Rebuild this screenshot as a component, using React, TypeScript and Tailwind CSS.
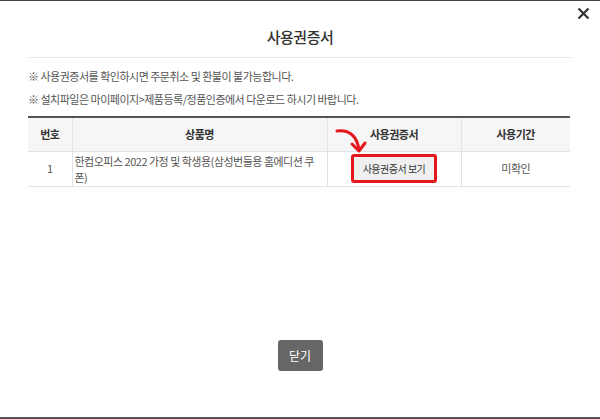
import React from "react";

const font = { fontFamily: '"Noto Sans CJK KR", "Noto Sans", sans-serif' };

function CurvedArrow() {
  return (
    <svg
      className="pointer-events-none absolute left-0 top-0"
      width="44"
      height="38"
      viewBox="0 0 44 38"
      fill="none"
      stroke="#e5161c"
      strokeWidth="3"
      strokeLinecap="round"
      strokeLinejoin="round"
    >
      <path d="M9 13 Q28 11 31 32" />
      <path d="M24 26 L31 33 L37 25" />
    </svg>
  );
}

export default function App() {
  return (
    <div
      className="relative flex h-[419px] w-[600px] flex-col border-t border-b-2 border-t-[#444] border-b-[#555] bg-white text-[#444]"
      style={font}
    >
      <button className="absolute right-[10px] top-[6px] text-[#333]" aria-label="닫기">
        <svg width="13" height="13" viewBox="0 0 13 13" stroke="currentColor" strokeWidth="2.2">
          <path d="M1.5 1.5 L11.5 11.5 M11.5 1.5 L1.5 11.5" />
        </svg>
      </button>

      <div className="mx-[28px] flex flex-col">
        <h1 className="mt-[25px] text-center text-[15px] font-medium leading-[22px] tracking-[-0.5px] text-[#333]">
          사용권증서
        </h1>
        <div className="mt-[9px] h-px bg-[#e6e6e6]" />

        <div className="mt-[10px] flex flex-col gap-[7px] text-[11px] leading-[16px] tracking-[-0.5px] text-[#555]">
          <p>※ 사용권증서를 확인하시면 주문취소 및 환불이 불가능합니다.</p>
          <p>※ 설치파일은 마이페이지&gt;제품등록/정품인증에서 다운로드 하시기 바랍니다.</p>
        </div>

        <table className="mt-[9px] w-[542px] table-fixed border-collapse border-t-2 border-t-[#555] text-[11px] tracking-[-0.5px]">
          <colgroup>
            <col className="w-[44px]" />
            <col className="w-[255px]" />
            <col className="w-[134px]" />
            <col className="w-[109px]" />
          </colgroup>
          <thead>
            <tr className="h-[34px] bg-[#f6f6f6] text-[#333]">
              <th className="border-b border-r border-[#e3e3e3] font-semibold">번호</th>
              <th className="border-b border-r border-[#e3e3e3] font-semibold">상품명</th>
              <th className="relative border-b border-r border-[#e3e3e3] font-semibold">
                <CurvedArrow />
                사용권증서
              </th>
              <th className="border-b border-[#e3e3e3] font-semibold">사용기간</th>
            </tr>
          </thead>
          <tbody>
            <tr className="h-[35px] text-[#555]">
              <td className="border-b border-r border-[#e3e3e3] text-center">1</td>
              <td className="border-b border-r border-[#e3e3e3] pl-[2px] pr-[8px] text-left leading-[16px]">
                한컴오피스 2022 가정 및 학생용(삼성번들용 홈에디션 쿠
                <br />
                폰)
              </td>
              <td className="border-b border-r border-[#e3e3e3] text-center">
                <span className="inline-flex h-[29px] w-[86px] items-center justify-center rounded-[3px] border-[3px] border-[#e5161c] bg-[#f0f0f0] text-[10px] text-[#333]">
                  사용권증서 보기
                </span>
              </td>
              <td className="border-b border-[#e3e3e3] text-center">미확인</td>
            </tr>
          </tbody>
        </table>
      </div>

      <div className="mt-auto mb-[46px] flex justify-center">
        <button className="h-[31px] w-[45px] rounded-[3px] bg-[#666] text-[12px] text-white">
          닫기
        </button>
      </div>
    </div>
  );
}
